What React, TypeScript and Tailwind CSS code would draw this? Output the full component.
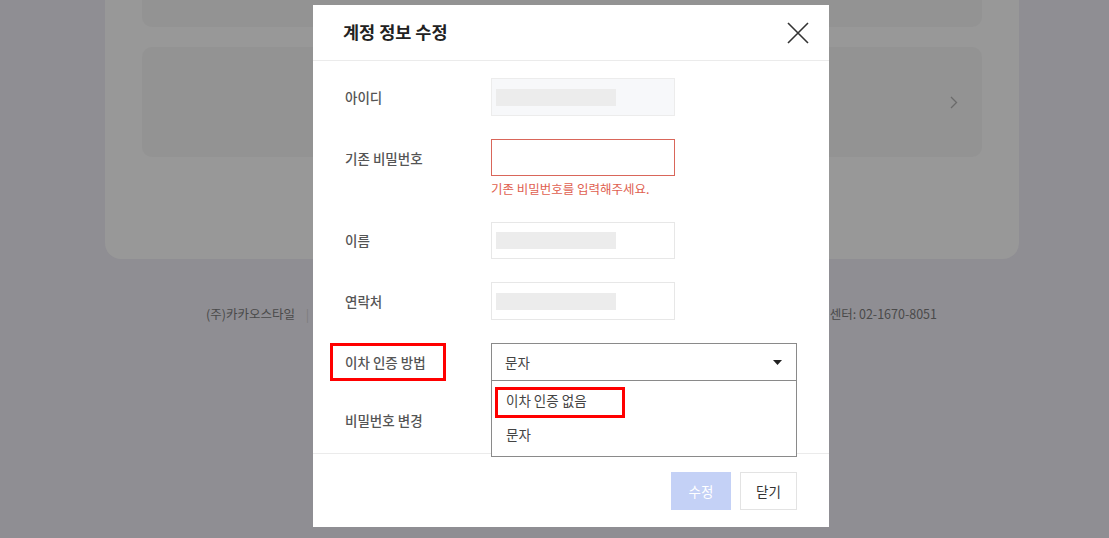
import React from 'react';

const font = { fontFamily: '"Noto Sans CJK KR", "Noto Sans", sans-serif' };

function Bar() {
  return <div className="h-[17px] w-[120px] bg-[#ececec]" />;
}

function Row({ label, h = 'h-[38px]', children }: { label: React.ReactNode; h?: string; children?: React.ReactNode }) {
  return (
    <div className="flex items-start">
      <div className={`w-[146px] ${h} flex items-center text-[13.5px] text-[#555] font-medium`}>{label}</div>
      <div className="flex-1">{children}</div>
    </div>
  );
}

function AccountModal() {
  return (
    <div className="absolute left-[313px] top-[5px] w-[516px] h-[522px] bg-white flex flex-col">
      <div className="h-[56px] shrink-0 flex items-center justify-between pl-[30px] pr-[20px] border-b border-[#ebebeb]">
        <h2 className="text-[17.5px] font-bold text-[#222] -mt-[1px]">계정 정보 수정</h2>
        <svg width="22" height="22" viewBox="0 0 22 22" fill="none" stroke="#333" strokeWidth="1.6">
          <path d="M1 1L21 21M21 1L1 21" />
        </svg>
      </div>

      <div className="flex-1 flex flex-col gap-[23px] px-[32px] pt-[17px]">
        <Row label="아이디">
          <div className="w-[184px] h-[38px] border border-[#ececec] bg-[#f7f8fa] flex items-center pl-[4px]">
            <Bar />
          </div>
        </Row>
        <Row label="기존 비밀번호">
          <div className="w-[184px] h-[37px] border border-[#d9665a]" />
          <p className="mt-[3px] h-[20px] text-[12.5px] leading-[20px] text-[#e0604f]">기존 비밀번호를 입력해주세요.</p>
        </Row>
        <Row label="이름" h="h-[37px]">
          <div className="w-[184px] h-[37px] border border-[#e7e7e7] flex items-center pl-[4px]">
            <Bar />
          </div>
        </Row>
        <Row label="연락처">
          <div className="w-[184px] h-[38px] border border-[#e7e7e7] flex items-center pl-[4px]">
            <Bar />
          </div>
        </Row>
        <Row
          label={
            <span className="relative">
              이차 인증 방법
              <span className="absolute -left-[15px] top-1/2 -translate-y-1/2 w-[116px] h-[38px] border-[3px] border-[#ff0000]" />
            </span>
          }
        >
          <div className="relative z-10">
            <div className="w-[306px] h-[38px] border border-[#8a8a8a] flex items-center justify-between pl-[13px] pr-[14px] text-[13.5px] text-[#444]">
              <span>문자</span>
              <svg width="9" height="5" viewBox="0 0 9 5">
                <path d="M0 0H9L4.5 5Z" fill="#222" />
              </svg>
            </div>
            <div className="absolute left-0 top-full w-[306px] h-[76px] bg-white border border-t-0 border-[#8a8a8a] text-[13.5px] text-[#444]">
              <div className="relative h-[40px] flex items-center pl-[14px] -mt-[1px]">
                <span>이차 인증 없음</span>
                <span className="absolute left-[3px] top-[7px] w-[130px] h-[31px] border-[3px] border-[#ff0000]" />
              </div>
              <div className="h-[28px] flex items-center pl-[14px]">문자</div>
            </div>
          </div>
        </Row>
        <Row label="비밀번호 변경" h="h-[32px]" />
      </div>

      <div className="shrink-0 h-[74px] border-t border-[#ebebeb] flex items-start justify-end gap-[9px] pt-[18px] pr-[32px]">
        <button className="w-[60px] h-[38px] bg-[#c4d1f6] text-white text-[13.5px]">수정</button>
        <button className="w-[57px] h-[38px] border border-[#e3e3e3] bg-white text-[#333] text-[13.5px]">닫기</button>
      </div>
    </div>
  );
}

export default function App() {
  return (
    <div className="relative w-[1109px] h-[538px] overflow-hidden bg-[#8f8e93]" style={font}>
      <div className="ml-[105px] w-[914px] h-[259px] rounded-b-[16px] bg-[#989898] px-[37px] flex flex-col">
        <div className="h-[27px] rounded-b-[10px] bg-[#939393]" />
        <div className="mt-[20px] h-[110px] rounded-[10px] bg-[#939393] flex items-center justify-end pr-[24px]">
          <svg width="8" height="13" viewBox="0 0 8 13" fill="none" stroke="#6b6b6b" strokeWidth="1.3">
            <path d="M1 1L6.5 6.5L1 12" />
          </svg>
        </div>
      </div>

      <div className="mt-[46px] ml-[206px] w-[731px] flex justify-between text-[12.5px] text-[#4a4a4a]">
        <span>
          (주)카카오스타일 <span className="ml-[8px] text-[#7d7d7d]">|</span>
        </span>
        <span>고객센터: 02-1670-8051</span>
      </div>

      <AccountModal />
    </div>
  );
}
